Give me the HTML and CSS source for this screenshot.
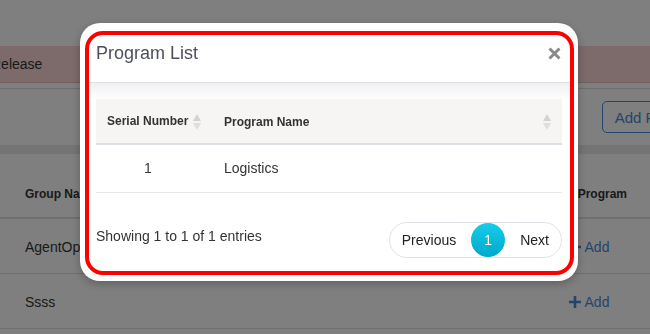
FILE: index.html
```html
<!DOCTYPE html>
<html lang="en">
<head>
    <meta charset="UTF-8">
    <title>Program List</title>
    <link rel="stylesheet" href="styles.css">
</head>
<body>
    <div class="page">
        <div class="alert">Release</div>
        <div class="toolbar">
            <button class="btn-outline">Add Program</button>
        </div>
        <div class="band"></div>
        <div class="card">
            <div class="grid-row grid-head">
                <div class="cell">Group Name</div>
                <div class="cell center">Add Program</div>
                <div class="cell">Action</div>
            </div>
            <div class="grid-row">
                <div class="cell">AgentOps</div>
                <div class="cell center"><a class="add-link" href="#"><svg width="12" height="12" viewBox="0 0 12 12"><path d="M6 0V12M0 6H12" stroke="currentColor" stroke-width="2.6"/></svg>Add</a></div>
                <div class="cell"></div>
            </div>
            <div class="grid-row">
                <div class="cell">Ssss</div>
                <div class="cell center"><a class="add-link" href="#"><svg width="12" height="12" viewBox="0 0 12 12"><path d="M6 0V12M0 6H12" stroke="currentColor" stroke-width="2.6"/></svg>Add</a></div>
                <div class="cell"></div>
            </div>
        </div>
    </div>

    <div class="backdrop"></div>

    <div class="modal">
        <div class="modal-content">
            <div class="modal-header">
                <h4 class="modal-title">Program List</h4>
                <button class="close" aria-label="Close">
                    <svg width="13" height="13" viewBox="0 0 13 13"><path d="M1.5 1.5L11.5 11.5M11.5 1.5L1.5 11.5" stroke="currentColor" stroke-width="3"/></svg>
                </button>
            </div>
            <div class="modal-body">
                <table class="data-table">
                    <thead>
                        <tr>
                            <th class="col-serial">Serial Number <svg class="sort" width="8" height="16" viewBox="0 0 8 16"><path d="M4 0L8 7H0Z" fill="#d3d3d3"/><path d="M0 9H8L4 16Z" fill="#dedede"/></svg></th>
                            <th><div class="th-flex">Program Name <svg class="sort" width="8" height="16" viewBox="0 0 8 16"><path d="M4 0L8 7H0Z" fill="#d3d3d3"/><path d="M0 9H8L4 16Z" fill="#dedede"/></svg></div></th>
                        </tr>
                    </thead>
                    <tbody>
                        <tr>
                            <td class="col-serial">1</td>
                            <td>Logistics</td>
                        </tr>
                    </tbody>
                </table>
            </div>
            <div class="modal-footer">
                <div class="info">Showing 1 to 1 of 1 entries</div>
                <div class="pagination">
                    <a class="page-prev" href="#">Previous</a>
                    <a class="page-current" href="#">1</a>
                    <a class="page-next" href="#">Next</a>
                </div>
            </div>
        </div>
    </div>
</body>
</html>
```

FILE: styles.css
```css
* {
    box-sizing: border-box;
}
body {
    margin: 0;
    font-family: 'Liberation Sans', Arial, sans-serif;
    background: #fff;
    color: #333;
    overflow: hidden;
    height: 334px;
}
.page {
    width: 740px;
    padding-top: 46px;
}
.alert {
    height: 37px;
    line-height: 36px;
    background: #fad6d6;
    border-bottom: 1px solid #e2bcbc;
    font-size: 14px;
    text-indent: -9px;
    white-space: nowrap;
}
.toolbar {
    margin-top: 5px;
    border-top: 1px solid #dcdcdc;
    display: flex;
    justify-content: flex-end;
    padding: 12px 24px 12px 0;
}
.btn-outline {
    height: 32px;
    padding: 0 12px;
    border: 1px solid #4a88d8;
    border-radius: 5px;
    background: #fff;
    color: #4a88d8;
    font-family: inherit;
    font-size: 15px;
    white-space: nowrap;
}
.band {
    height: 9px;
    background: #e8e8e8;
}
.card {
    padding-top: 16px;
}
.grid-row {
    display: grid;
    grid-template-columns: 529px 120px 91px;
    height: 55px;
    border-bottom: 1px solid #dedede;
    align-items: center;
    font-size: 14px;
    padding-top: 2px;
}
.grid-head {
    height: 49px;
    border-bottom: 2px solid #dcdfe3;
    font-size: 12px;
    font-weight: bold;
    padding: 1px 0 0;
}
.cell {
    padding-left: 25px;
}
.cell.center {
    padding-left: 0;
    text-align: center;
}
.add-link {
    color: #4a88d8;
    text-decoration: none;
    display: inline-flex;
    align-items: center;
    gap: 4px;
}
.backdrop {
    position: fixed;
    inset: 0;
    background: rgba(0, 0, 0, 0.5);
}
.modal {
    position: fixed;
    left: 80px;
    top: 23px;
    width: 498px;
    background: #fff;
    border-radius: 20px;
    padding: 8px 4px 6px 5px;
    box-shadow: 0 3px 10px rgba(0, 0, 0, 0.25);
}
.modal-content {
    border: 4px solid #ff0000;
    border-radius: 18px;
    overflow: hidden;
}
.modal-header {
    display: flex;
    justify-content: space-between;
    align-items: center;
    padding: 8px 9px 19px 7px;
    border-bottom: 1px solid #e0e0e6;
}
.modal-title {
    margin: 0;
    font-size: 18px;
    line-height: 20px;
    font-weight: normal;
    color: #4d4f5c;
}
.close {
    border: none;
    background: none;
    padding: 0;
    color: #8a8a8a;
    display: flex;
}
.modal-body {
    padding: 16px 8px 0 7px;
    background: linear-gradient(#f0f0f2, #fff 17px);
}
.data-table {
    width: 100%;
    border-collapse: collapse;
}
.data-table th {
    height: 45px;
    padding: 1px 11px 0 10px;
    background: #f6f5f4;
    border-bottom: 2px solid #dde1e6;
    font-size: 12px;
    text-align: left;
    color: #333;
}
.data-table th.col-serial {
    width: 118px;
    padding-left: 11px;
    white-space: nowrap;
}
.th-flex {
    display: flex;
    justify-content: space-between;
    align-items: center;
}
.sort {
    vertical-align: middle;
    margin-left: 1px;
}
.data-table td {
    height: 48px;
    padding: 0 10px;
    font-size: 14px;
    color: #333;
    border-bottom: 1px solid #e6e6e6;
}
.data-table td.col-serial {
    text-align: center;
    padding-right: 24px;
}
.modal-footer {
    display: flex;
    justify-content: space-between;
    align-items: flex-start;
    padding: 29px 8px 13px 7px;
}
.info {
    padding-top: 4px;
    font-size: 14px;
    line-height: 20px;
    color: #333;
}
.pagination {
    display: flex;
    align-items: center;
    border: 1px solid #dfe3e7;
    border-radius: 18px;
}
.pagination a {
    font-size: 14px;
    line-height: 20px;
    color: #222;
    text-decoration: none;
}
.page-prev {
    padding: 0 15px 0 12px;
}
.page-next {
    padding: 0 12px 0 15px;
}
.pagination .page-current {
    width: 34px;
    height: 34px;
    border-radius: 50%;
    background: linear-gradient(#16cdea, #00a8cc);
    color: #fff;
    display: flex;
    align-items: center;
    justify-content: center;
}
```
